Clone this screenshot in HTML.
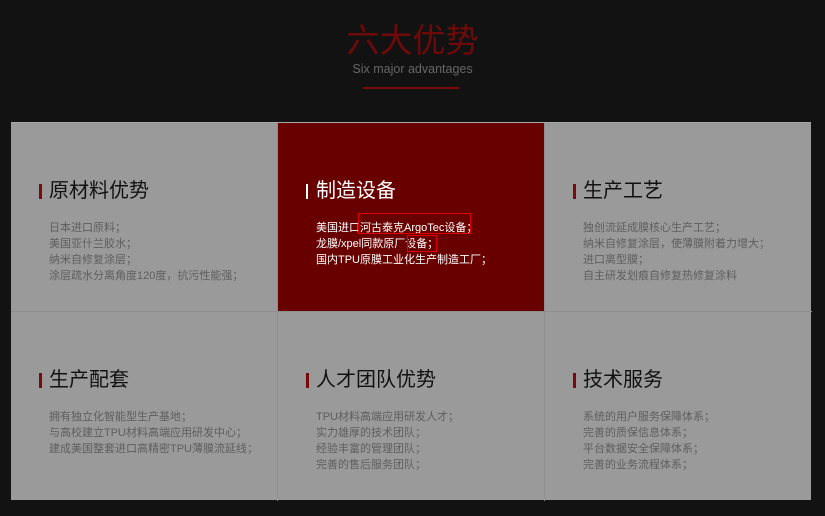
<!DOCTYPE html>
<html><head><meta charset="utf-8"><style>
*{margin:0;padding:0;box-sizing:border-box}
body{width:825px;height:516px;background:#121212;overflow:hidden;position:relative;font-family:"Liberation Sans","Noto Sans CJK SC",sans-serif}
.h{position:absolute;left:0;width:825px;text-align:center}
.t{top:21px;font-size:33px;color:#6e0a0a;line-height:40px}
.s{top:62px;font-size:12.5px;color:#666}
.ln{position:absolute;left:363px;top:87px;width:96px;height:2px;background:#7a0a0a}
.p{position:absolute;left:11px;top:122px;width:800px;height:378px;background:#9a9a9a;border-top:1px solid #a8a8a8}
.c{position:absolute;width:267px;height:189px;border-right:1px solid #8e8e8e;border-bottom:1px solid #8e8e8e}
.c h3{position:absolute;left:38px;top:56px;font-size:20px;font-weight:normal;color:#111;line-height:24px}
.c h3:before{content:"";position:absolute;left:-10px;top:5px;width:3px;height:15px;background:#7a0a0a}
.c p{position:absolute;left:38px;top:97px;font-size:11px;color:#5e5e5e;line-height:16px}
.r{background:#680000}
.r h3{color:#fff}.r h3:before{background:#fff;width:2px}
.r p{color:#fff}
.b{position:absolute;border:1.5px solid #d00}
</style></head><body>
<div class="h t">六大优势</div>
<div class="h s">Six major advantages</div>
<div class="ln"></div>
<div class="p">
<div class="c" style="left:0;top:0"><h3>原材料优势</h3><p>日本进口原料；<br>美国亚什兰胶水；<br>纳米自修复涂层；<br>涂层疏水分离角度120度，抗污性能强；</p></div>
<div class="c r" style="left:267px;top:0"><h3>制造设备</h3><p>美国进口河古泰克ArgoTec设备；<br>龙膜/xpel同款原厂设备；<br>国内TPU原膜工业化生产制造工厂；</p>
<div class="b" style="left:80px;top:90px;width:113px;height:21px"></div>
<div class="b" style="left:129px;top:112px;width:30px;height:17px"></div></div>
<div class="c" style="left:534px;top:0;border-right:none"><h3>生产工艺</h3><p>独创流延成膜核心生产工艺；<br>纳米自修复涂层，使薄膜附着力增大；<br>进口离型膜；<br>自主研发划痕自修复热修复涂料</p></div>
<div class="c" style="left:0;top:189px;border-bottom:none"><h3>生产配套</h3><p>拥有独立化智能型生产基地；<br>与高校建立TPU材料高端应用研发中心；<br>建成美国整套进口高精密TPU薄膜流延线；</p></div>
<div class="c" style="left:267px;top:189px;border-bottom:none"><h3>人才团队优势</h3><p>TPU材料高端应用研发人才；<br>实力雄厚的技术团队；<br>经验丰富的管理团队；<br>完善的售后服务团队；</p></div>
<div class="c" style="left:534px;top:189px;border:none"><h3>技术服务</h3><p>系统的用户服务保障体系；<br>完善的质保信息体系；<br>平台数据安全保障体系；<br>完善的业务流程体系；</p></div>
</div>
</body></html>
